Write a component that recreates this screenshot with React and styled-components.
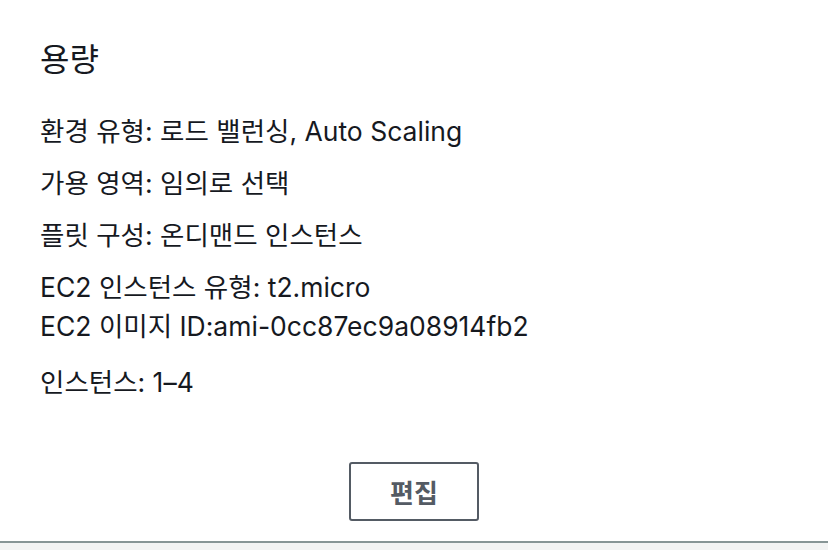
import React from 'react';
import styled, { createGlobalStyle } from 'styled-components';

const GlobalStyle = createGlobalStyle`
	body {
		margin: 0;
		background: #f2f3f3;
		font-family: Inter, "Noto Sans CJK KR", sans-serif;
		color: #16191f;
	}
`;

const Card = styled.section`
	background: #fff;
	height: 543px;
	box-sizing: border-box;
	padding: 37px 40px 0;
	display: flex;
	flex-direction: column;
	border-bottom: 2px solid #879596;
	box-shadow: 0 1px 1px 0 rgba(0, 28, 36, 0.2);
`;

const Title = styled.h2`
	margin: 0 0 35px;
	font-size: 32px;
	line-height: 40px;
	font-weight: 400;
	font-family: "Noto Sans CJK KR", sans-serif;
`;

const Group = styled.div`
	font-size: 26.5px;
	line-height: 39px;
	margin-bottom: ${props => props.gap || 13}px;
`;

const Footer = styled.div`
	display: flex;
	justify-content: center;
	margin-top: auto;
	margin-bottom: 20px;
`;

const Button = styled.button`
	width: 130px;
	height: 59px;
	border: 2px solid #545b64;
	border-radius: 3px;
	background: #fff;
	color: #545b64;
	font-family: "Noto Sans CJK KR", sans-serif;
	font-size: 26px;
	font-weight: 700;
	cursor: pointer;
`;

const App = () => (
	<>
		<GlobalStyle/>
		<Card>
			<Title>용량</Title>
			<Group>환경 유형: 로드 밸런싱, Auto Scaling</Group>
			<Group>가용 영역: 임의로 선택</Group>
			<Group>플릿 구성: 온디맨드 인스턴스</Group>
			<Group gap={17}>
				<div>EC2 인스턴스 유형: t2.micro</div>
				<div>EC2 이미지 ID:ami-0cc87ec9a08914fb2</div>
			</Group>
			<Group>인스턴스: 1–4</Group>
			<Footer>
				<Button>편집</Button>
			</Footer>
		</Card>
	</>
);

export default App;
